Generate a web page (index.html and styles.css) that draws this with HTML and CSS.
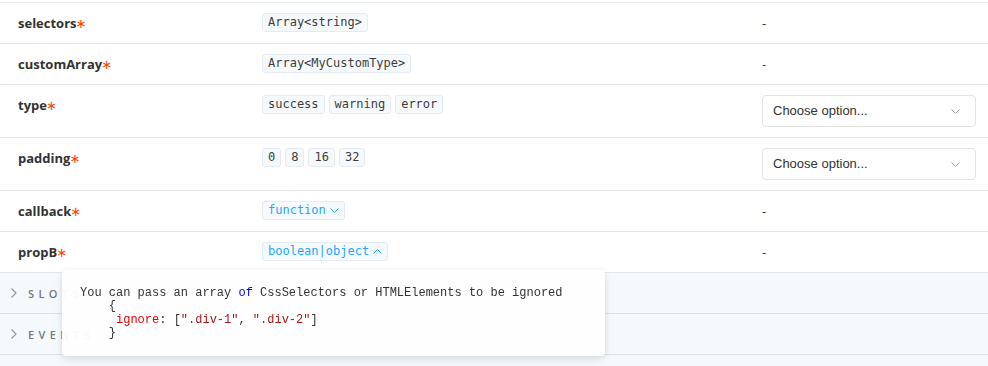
FILE: index.html
```html
<!DOCTYPE html>
<html>
<head>
    <meta charset="UTF-8">
    <title>Args Table</title>
    <link rel="stylesheet" href="styles.css">
</head>
<body>
    <div class="args-table">
        <div class="row">
            <div class="cell name">selectors<span class="req">∗</span></div>
            <div class="cell type"><span class="badge">Array&lt;string&gt;</span></div>
            <div class="cell control"><span class="dash">-</span></div>
        </div>
        <div class="row">
            <div class="cell name">customArray<span class="req">∗</span></div>
            <div class="cell type"><span class="badge">Array&lt;MyCustomType&gt;</span></div>
            <div class="cell control"><span class="dash">-</span></div>
        </div>
        <div class="row">
            <div class="cell name">type<span class="req">∗</span></div>
            <div class="cell type">
                <span class="badge">success</span>
                <span class="badge">warning</span>
                <span class="badge">error</span>
            </div>
            <div class="cell control">
                <div class="select">
                    <span>Choose option...</span>
                    <svg width="9" height="5" viewBox="0 0 9 5"><path d="M0.5 0.5 L4.5 4.5 L8.5 0.5" fill="none" stroke="#a3a3a3" stroke-width="1"/></svg>
                </div>
            </div>
        </div>
        <div class="row">
            <div class="cell name">padding<span class="req">∗</span></div>
            <div class="cell type">
                <span class="badge">0</span>
                <span class="badge">8</span>
                <span class="badge">16</span>
                <span class="badge">32</span>
            </div>
            <div class="cell control">
                <div class="select">
                    <span>Choose option...</span>
                    <svg width="9" height="5" viewBox="0 0 9 5"><path d="M0.5 0.5 L4.5 4.5 L8.5 0.5" fill="none" stroke="#a3a3a3" stroke-width="1"/></svg>
                </div>
            </div>
        </div>
        <div class="row">
            <div class="cell name">callback<span class="req">∗</span></div>
            <div class="cell type">
                <span class="badge link">function<svg width="9" height="5" viewBox="0 0 9 5"><path d="M0.5 0.5 L4.5 4.5 L8.5 0.5" fill="none" stroke="currentColor" stroke-width="1"/></svg></span>
            </div>
            <div class="cell control"><span class="dash">-</span></div>
        </div>
        <div class="row">
            <div class="cell name">propB<span class="req">∗</span></div>
            <div class="cell type">
                <span class="badge link">boolean|object<svg width="9" height="5" viewBox="0 0 9 5"><path d="M0.5 4.5 L4.5 0.5 L8.5 4.5" fill="none" stroke="currentColor" stroke-width="1"/></svg></span>
            </div>
            <div class="cell control"><span class="dash">-</span></div>
        </div>

        <div class="section">
            <svg width="6" height="10" viewBox="0 0 6 10"><path d="M0.5 0.5 L5 5 L0.5 9.5" fill="none" stroke="#8f959c" stroke-width="1.1"/></svg>
            <span>Slots</span>
        </div>
        <div class="section">
            <svg width="6" height="10" viewBox="0 0 6 10"><path d="M0.5 0.5 L5 5 L0.5 9.5" fill="none" stroke="#8f959c" stroke-width="1.1"/></svg>
            <span>Events</span>
        </div>
        <div class="section last"></div>

        <div class="tooltip">
<pre>You can pass an array <span class="kw">of</span> CssSelectors or HTMLElements to be ignored
    {
     <span class="prop">ignore</span>: [<span class="str">".div-1"</span>, <span class="str">".div-2"</span>]
    }</pre>
        </div>
    </div>
</body>
</html>
```

FILE: styles.css
```css
body {
    margin: 0;
    background-color: #fff;
    font-family: "Open Sans", "Noto Sans", sans-serif;
    color: #333;
}

.args-table {
    position: relative;
    margin-top: 2px;
    border-top: 1px solid #e6ecf2;
}

.row {
    display: grid;
    grid-template-columns: 247px 500px 1fr;
    border-bottom: 1px solid #e6e6e6;
    background-color: #fff;
}

.cell {
    padding: 10px 15px;
    font-size: 13px;
    line-height: 20px;
}

.cell.name {
    height: 20px;
    padding-left: 18px;
    font-weight: 700;
    color: #333;
}

.req {
    font-family: "DejaVu Sans", sans-serif;
    font-weight: 400;
    font-size: 13px;
    line-height: 13px;
    color: #ff4400;
    margin-left: -1px;
}

.cell.type {
    display: flex;
    flex-wrap: wrap;
    align-items: flex-start;
    gap: 4px;
}

.badge {
    display: inline-flex;
    align-items: center;
    height: 17px;
    padding: 0 5px;
    border: 1px solid #e4ebf1;
    border-radius: 3px;
    background-color: #f6f9fc;
    font-family: "DejaVu Sans Mono", monospace;
    font-size: 12px;
    line-height: 17px;
    color: #3d3d3d;
}

.badge.link {
    color: #1ea7fd;
}

.badge svg {
    margin-left: 4px;
}

.dash {
    color: #333;
}

.select {
    display: flex;
    align-items: center;
    justify-content: space-between;
    width: 214px;
    height: 32px;
    box-sizing: border-box;
    padding: 0 15px 0 10px;
    border: 1px solid #e3e3e3;
    border-radius: 4px;
    background-color: #fff;
    font-family: "Liberation Sans", Arial, sans-serif;
    font-size: 13px;
    color: #333;
}

.section {
    display: flex;
    align-items: center;
    height: 40px;
    padding-left: 11px;
    background-color: #f6f9fc;
    border-bottom: 1px solid #dbe2ea;
}

.section span {
    margin-left: 11px;
    font-size: 11px;
    font-weight: 600;
    letter-spacing: 0.4em;
    text-transform: uppercase;
    color: #74797f;
}

.section.last {
    height: 11px;
    border-bottom: none;
}

.tooltip {
    position: absolute;
    left: 62px;
    top: 267px;
    width: 543px;
    height: 86px;
    box-sizing: border-box;
    padding: 17px 18px 0;
    border-radius: 4px;
    background-color: rgba(255, 255, 255, 0.95);
    filter: drop-shadow(0 5px 5px rgba(0, 0, 0, 0.05)) drop-shadow(0 1px 3px rgba(0, 0, 0, 0.1));
}

.tooltip pre {
    margin: 0;
    font-family: "Liberation Mono", monospace;
    font-size: 12px;
    line-height: 13.4px;
    color: #333;
}

.kw {
    color: #0000ff;
}

.prop {
    color: #e60000;
}

.str {
    color: #a31515;
}
```
